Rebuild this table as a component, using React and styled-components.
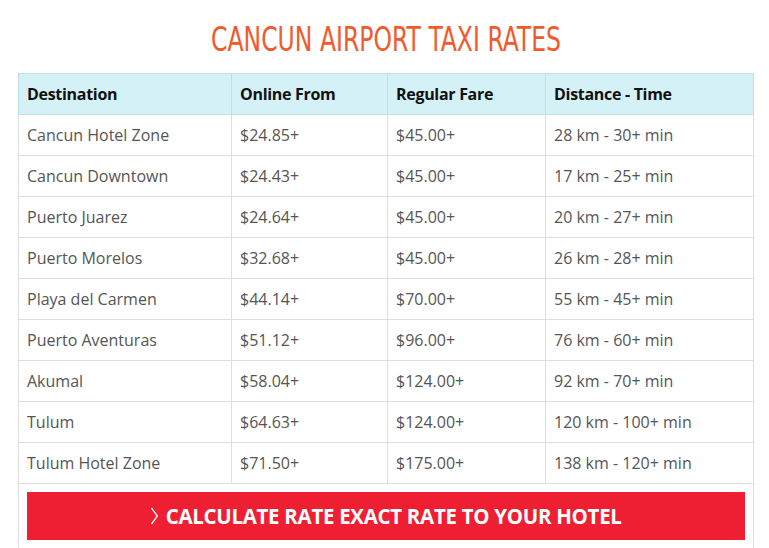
import React from "react";
import styled, { createGlobalStyle } from "styled-components";

const GlobalStyle = createGlobalStyle`
  body {
    margin: 0;
    background: #fff;
    font-family: "Open Sans", "Liberation Sans", sans-serif;
  }
`;

const Page = styled.div`
  padding: 0 15px 0 18px;
`;

const Title = styled.h1`
  margin: 0;
  padding-top: 21px;
  height: 73px;
  box-sizing: border-box;
  text-align: center;
  font-family: "DejaVu Sans Condensed", "DejaVu Sans", sans-serif;
  font-stretch: condensed;
  font-weight: 400;
  font-size: 34px;
  line-height: 36px;
  color: #f15a2b;
  transform: scaleX(0.77);
`;

const Table = styled.table`
  width: 736px;
  border-collapse: collapse;
  table-layout: fixed;
`;

const HeadCell = styled.th`
  height: 41px;
  box-sizing: border-box;
  padding: 0 8px;
  text-align: left;
  font-weight: 700;
  font-size: 16px;
  letter-spacing: -0.3px;
  color: #111;
  background: #d4f1f7;
  border: 1px solid #bfdfe6;
`;

const Cell = styled.td`
  height: 41px;
  box-sizing: border-box;
  padding: 0 8px;
  font-size: 16px;
  color: #555;
  border: 1px solid #dedede;
`;

const ButtonCell = styled.td`
  padding: 8px 8px 20px 8px;
  border: 1px solid #dedede;
  border-bottom: none;
`;

const Button = styled.button`
  display: flex;
  align-items: center;
  justify-content: center;
  width: 100%;
  height: 48px;
  padding: 0;
  border: none;
  background: #ee1f33;
  color: #fff;
  font-family: "Open Sans", sans-serif;
  font-weight: 700;
  font-size: 21px;
  cursor: pointer;
`;

const ButtonLabel = styled.span`
  display: inline-flex;
  align-items: center;
  gap: 7px;
  transform: scaleX(0.975);
  letter-spacing: -0.3px;
`;

const rows = [
  ["Cancun Hotel Zone", "$24.85+", "$45.00+", "28 km - 30+ min"],
  ["Cancun Downtown", "$24.43+", "$45.00+", "17 km - 25+ min"],
  ["Puerto Juarez", "$24.64+", "$45.00+", "20 km - 27+ min"],
  ["Puerto Morelos", "$32.68+", "$45.00+", "26 km - 28+ min"],
  ["Playa del Carmen", "$44.14+", "$70.00+", "55 km - 45+ min"],
  ["Puerto Aventuras", "$51.12+", "$96.00+", "76 km - 60+ min"],
  ["Akumal", "$58.04+", "$124.00+", "92 km - 70+ min"],
  ["Tulum", "$64.63+", "$124.00+", "120 km - 100+ min"],
  ["Tulum Hotel Zone", "$71.50+", "$175.00+", "138 km - 120+ min"],
];

function App() {
  return (
    <Page>
      <GlobalStyle />
      <Title>CANCUN AIRPORT TAXI RATES</Title>
      <Table>
        <colgroup>
          <col style={{ width: 213 }} />
          <col style={{ width: 156 }} />
          <col style={{ width: 158 }} />
          <col />
        </colgroup>
        <thead>
          <tr>
            <HeadCell>Destination</HeadCell>
            <HeadCell>Online From</HeadCell>
            <HeadCell>Regular Fare</HeadCell>
            <HeadCell>Distance - Time</HeadCell>
          </tr>
        </thead>
        <tbody>
          {rows.map((r) => (
            <tr key={r[0]}>
              {r.map((c, i) => (
                <Cell key={i}>{c}</Cell>
              ))}
            </tr>
          ))}
          <tr>
            <ButtonCell colSpan={4}>
              <Button>
                <ButtonLabel>
                  <svg width="9" height="22" viewBox="0 0 9 22">
                    <path d="M1.5 3 L7.5 11 L1.5 19" fill="none" stroke="#fff" strokeWidth="1.3" />
                  </svg>
                  CALCULATE RATE EXACT RATE TO YOUR HOTEL
                </ButtonLabel>
              </Button>
            </ButtonCell>
          </tr>
        </tbody>
      </Table>
    </Page>
  );
}

export default App;
